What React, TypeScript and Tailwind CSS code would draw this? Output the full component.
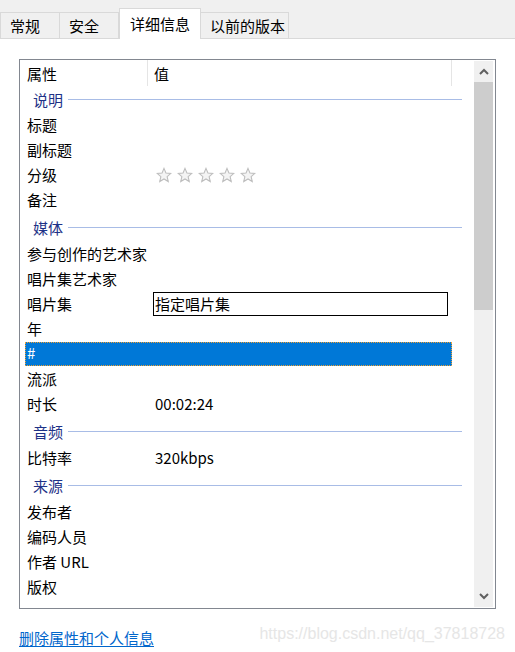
import React from 'react';

const font = { fontFamily: '"Noto Sans CJK SC", "Noto Sans", sans-serif' };

type Row =
  | { kind: 'group'; label: string; h: string }
  | { kind: 'item'; name: string; value?: string; stars?: boolean; input?: boolean; selected?: boolean };

const rows: Row[] = [
  { kind: 'group', label: '说明', h: 'h-[27px]' },
  { kind: 'item', name: '标题' },
  { kind: 'item', name: '副标题' },
  { kind: 'item', name: '分级', stars: true },
  { kind: 'item', name: '备注' },
  { kind: 'group', label: '媒体', h: 'h-[29px]' },
  { kind: 'item', name: '参与创作的艺术家' },
  { kind: 'item', name: '唱片集艺术家' },
  { kind: 'item', name: '唱片集', value: '指定唱片集', input: true },
  { kind: 'item', name: '年' },
  { kind: 'item', name: '#', selected: true },
  { kind: 'item', name: '流派' },
  { kind: 'item', name: '时长', value: '00:02:24' },
  { kind: 'group', label: '音频', h: 'h-[29px]' },
  { kind: 'item', name: '比特率', value: '320kbps' },
  { kind: 'group', label: '来源', h: 'h-[29px]' },
  { kind: 'item', name: '发布者' },
  { kind: 'item', name: '编码人员' },
  { kind: 'item', name: '作者 URL' },
  { kind: 'item', name: '版权' },
];

const Star = () => (
  <svg width="16" height="16" viewBox="0 0 24 24">
    <polygon
      points="12,2 14.9,8.9 22.3,9.6 16.7,14.5 18.4,21.8 12,17.9 5.6,21.8 7.3,14.5 1.7,9.6 9.1,8.9"
      fill="#f4f4f4"
      stroke="#bdbdbd"
      strokeWidth="1.6"
      strokeLinejoin="miter"
    />
  </svg>
);

const Tab = ({ label, active, w }: { label: string; active?: boolean; w: string }) =>
  active ? (
    <div className={`${w} h-[31px] -mb-px bg-white border border-b-0 border-[#d9d9d9] flex items-center pl-[10px] pb-[2px] text-black`}>
      {label}
    </div>
  ) : (
    <div className={`${w} h-[26px] bg-[#f0f0f0] border border-b-0 border-[#d9d9d9] -ml-px first:ml-0 flex items-center pl-[9px] text-black`}>
      {label}
    </div>
  );

export default function App() {
  return (
    <div className="w-[515px] h-[652px] bg-white text-[15px] leading-none overflow-hidden" style={font}>
      <div className="h-[39px] bg-[#f0f0f0] border-b border-[#d9d9d9] flex items-end">
        <Tab label="常规" w="w-[60px]" />
        <Tab label="安全" w="w-[60px]" />
        <Tab label="详细信息" w="w-[82px]" active />
        <Tab label="以前的版本" w="w-[89px]" />
      </div>

      <div className="pl-[19px] pt-[20px]">
        <div className="w-[477px] h-[550px] border border-[#828790] flex">
          <div className="flex-1 pl-[5px]">
            <div className="h-[26px] flex text-black">
              <div className="w-[123px] pl-[2px] border-r border-[#e5e5e5] flex items-center">属性</div>
              <div className="w-[304px] pl-[6px] border-r border-[#e5e5e5] flex items-center">值</div>
            </div>
            {rows.map((r, i) =>
              r.kind === 'group' ? (
                <div key={i} className={`${r.h} w-[437px] flex items-center`}>
                  <span className="pl-[8px] pr-[5px] pb-[1px] text-[#1e3287]">{r.label}</span>
                  <div className="flex-1 h-px bg-[#a8bce6]" />
                </div>
              ) : (
                <div key={i} className="h-[25px] w-[427px] flex">
                  <div
                    className={`w-full flex items-center ${
                      r.selected ? 'h-[24px] bg-[#0078d7] text-white outline-1 outline-dotted outline-[#f0a030] -outline-offset-1' : 'text-black'
                    }`}
                  >
                    <div className="w-[128px] pl-[2px] pb-[3px]">{r.name}</div>
                    <div className="flex-1 flex items-center">
                      {r.stars ? (
                        <div className="flex gap-[5px] pl-[3px] pb-[1px]">
                          <Star />
                          <Star />
                          <Star />
                          <Star />
                          <Star />
                        </div>
                      ) : r.input ? (
                        <div className="w-[295px] h-[24px] -mt-[1px] border border-black flex items-center pl-[1px] pb-[2px]">
                          {r.value}
                        </div>
                      ) : (
                        <span className="pl-[2px] pb-[3px]">{r.value}</span>
                      )}
                    </div>
                  </div>
                </div>
              ),
            )}
          </div>
          <div className="w-[19px] mr-[2px] mt-[1px] mb-[1px] bg-[#f0f0f0] flex flex-col">
            <div className="h-[21px] flex items-center justify-center">
              <svg width="10" height="7" viewBox="0 0 10 7">
                <path d="M1 6 L5 2 L9 6" fill="none" stroke="#606060" strokeWidth="2" />
              </svg>
            </div>
            <div className="h-[228px] bg-[#cdcdcd]" />
            <div className="flex-1" />
            <div className="h-[21px] flex items-center justify-center">
              <svg width="10" height="7" viewBox="0 0 10 7">
                <path d="M1 1 L5 5 L9 1" fill="none" stroke="#606060" strokeWidth="2" />
              </svg>
            </div>
          </div>
        </div>
      </div>

      <div className="flex items-center justify-between pl-[19px] pr-[10px] mt-[17px]">
        <span className="text-[#0066cc] underline underline-offset-2">删除属性和个人信息</span>
        <span
          className="text-[#e6e6e6] text-[16px] pb-[6px]"
          style={{ fontFamily: '"Liberation Sans", Arial, sans-serif' }}
        >
          https://blog.csdn.net/qq_37818728
        </span>
      </div>
    </div>
  );
}
